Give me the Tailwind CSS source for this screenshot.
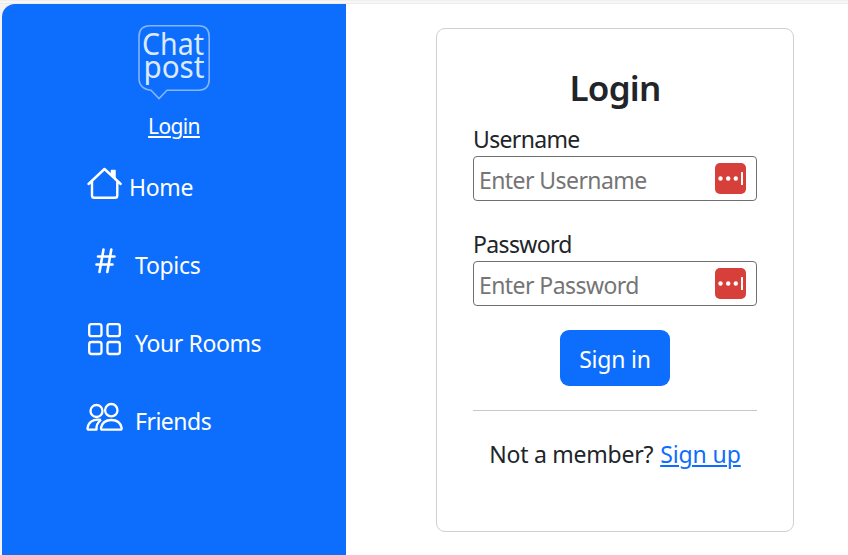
<!DOCTYPE html>
<html lang="en">
<head>
<meta charset="utf-8">
<title>Chatpost - Login</title>
<script src="https://cdn.jsdelivr.net/npm/@tailwindcss/browser@4"></script>
</head>
<body class="h-[555px] overflow-hidden bg-white font-['Noto_Sans','Open_Sans',sans-serif] text-[23px] leading-[36px] text-[#212529]">
<div class="flex h-[4px] flex-col bg-[#f7f7f7]"><div class="h-px bg-[#efefef]"></div><div class="mt-auto h-px bg-[#ebebeb]"></div></div>
<div class="flex h-[551px] bg-gradient-to-r from-[#f3f3f3] from-[20px] to-white to-[20px] pl-[2px]">
  <aside class="flex w-[344px] shrink-0 flex-col rounded-tl-[13px] bg-[#0d6efd] text-white">
    <div class="flex flex-col items-center pt-[20px]">
      <svg class="h-[78px] w-[76px]" viewBox="136 24 76 78" fill="none">
        <path d="M150 25.800H198.500Q209.200 25.800 209.200 37V79Q209.200 90.200 198.500 90.200H167L159 98.500L151 90.200Q139 89 139 78V37Q139 25.800 150 25.800Z" stroke="#84b5fe" stroke-width="1.600"/>
        <text x="142" y="55" textLength="62" lengthAdjust="spacingAndGlyphs" font-family="Noto Sans" font-size="31" fill="#dceaff">Chat</text>
        <text x="143.500" y="78" textLength="61" lengthAdjust="spacingAndGlyphs" font-family="Noto Sans" font-size="31" fill="#dceaff">post</text>
      </svg>
      <a href="#" class="mt-[9px] text-[21px] leading-[30px] tracking-[-0.650px] underline decoration-[2px] underline-offset-[2px]">Login</a>
    </div>
    <nav class="mt-[28px] flex flex-col gap-[42px] pl-[84px]">
      <a class="flex h-[36px]"><svg class="mt-[-4px] mr-[5px] h-[36px] w-[38px] shrink-0" viewBox="86 165 38 36" fill="none" stroke="white" stroke-width="2.400" stroke-linecap="round" stroke-linejoin="round"><path d="M88.500 184L104.500 169L120.700 184M92 181V195.500Q92 197.800 94.300 197.800H115Q117.300 197.800 117.300 195.500V181"/><path d="M111.500 170.500H115V178L111.500 174.500Z" fill="white" stroke-width="1.500"/></svg><span class="tracking-[-0.300px]">Home</span></a>
      <a class="flex h-[36px]"><svg class="mt-[-4px] mr-[11px] h-[36px] w-[38px] shrink-0" viewBox="86 243 38 36" fill="none" stroke="white" stroke-width="2.600" stroke-linecap="round"><path d="M103.500 249.500L99.500 272M111.300 249.500L107.300 272M98 256.500H114.500M96.500 264.500H112.500"/></svg><span class="tracking-[-0.300px]">Topics</span></a>
      <a class="flex h-[36px]"><svg class="mt-[-4px] mr-[11px] h-[36px] w-[38px] shrink-0" viewBox="86 321 38 36" fill="none" stroke="white" stroke-width="2.300"><rect x="89.200" y="324.200" width="12.300" height="12" rx="2.300"/><rect x="107.500" y="324.200" width="12.300" height="12" rx="2.300"/><rect x="89.200" y="342" width="12.300" height="12" rx="2.300"/><rect x="107.500" y="342" width="12.300" height="12" rx="2.300"/></svg><span class="tracking-[-0.400px]">Your Rooms</span></a>
      <a class="flex h-[36px]"><svg class="mt-[-4px] mr-[11px] h-[36px] w-[38px] shrink-0" viewBox="86 399 38 36" fill="none" stroke="white" stroke-width="2.300"><circle cx="96.500" cy="411" r="6"/><circle cx="111.300" cy="410.200" r="6.200"/><path d="M101 419.900C92 418.500 88 423 87.500 428.500Q87.500 429.700 89 429.700H96.500Q96 423.500 101 419.900M102.300 429.700Q100.800 429.700 101 428C102 422.500 105.500 420 111.500 420S120.500 422.500 121.700 428Q121.900 429.700 120.300 429.700Z" stroke-linejoin="round"/></svg><span class="tracking-[-0.500px]">Friends</span></a>
    </nav>
  </aside>
  <main class="flex grow justify-center bg-white pt-[24px] pr-[54px] pl-[90px]">
    <form class="flex h-[504px] w-[358px] flex-col rounded-[9px] border border-[#d0d0d0] px-[36px] pt-[35px]">
      <h1 class="h-[57px] text-center text-[35px] leading-[48px] font-semibold tracking-[-0.800px]">Login</h1>
      <label class="flex h-[35px] items-start"><span class="tracking-[-0.650px]">Username</span></label>
      <div class="flex h-[45px] items-center justify-between rounded-[4px] border border-[#707070] pr-[10px] pl-[5px]">
        <span class="pt-[3px] text-[#757575] tracking-[-0.570px]">Enter Username</span>
        <svg class="h-[31px] w-[31px]" viewBox="0 0 31 31"><rect width="31" height="31" rx="5" fill="#d63f3a"/><g fill="white"><circle cx="5.500" cy="15.500" r="2.200"/><circle cx="13.200" cy="15.500" r="2.200"/><circle cx="20.800" cy="15.500" r="2.200"/><rect x="26" y="9" width="2" height="13" rx=".5"/></g></svg>
      </div>
      <label class="mt-[25px] flex h-[35px] items-start"><span class="tracking-[-0.650px]">Password</span></label>
      <div class="flex h-[45px] items-center justify-between rounded-[4px] border border-[#707070] pr-[10px] pl-[5px]">
        <span class="pt-[3px] text-[#757575] tracking-[-0.570px]">Enter Password</span>
        <svg class="h-[31px] w-[31px]" viewBox="0 0 31 31"><rect width="31" height="31" rx="5" fill="#d63f3a"/><g fill="white"><circle cx="5.500" cy="15.500" r="2.200"/><circle cx="13.200" cy="15.500" r="2.200"/><circle cx="20.800" cy="15.500" r="2.200"/><rect x="26" y="9" width="2" height="13" rx=".5"/></g></svg>
      </div>
      <button type="button" class="mt-[24px] h-[56px] w-[110px] self-center rounded-[9px] bg-[#0d6efd] pt-[2px] text-white tracking-[-0.200px]">Sign in</button>
      <div class="mt-[24px] h-px bg-[#c6c8ca]"></div>
      <p class="mt-[25px] flex justify-center whitespace-nowrap"><span class="mr-[7px] tracking-[-0.250px]">Not a member?</span><a href="#" class="text-[#0d6efd] tracking-[-0.100px] underline decoration-[2px] underline-offset-[2px]">Sign up</a></p>
    </form>
  </main>
</div>
</body>
</html>
